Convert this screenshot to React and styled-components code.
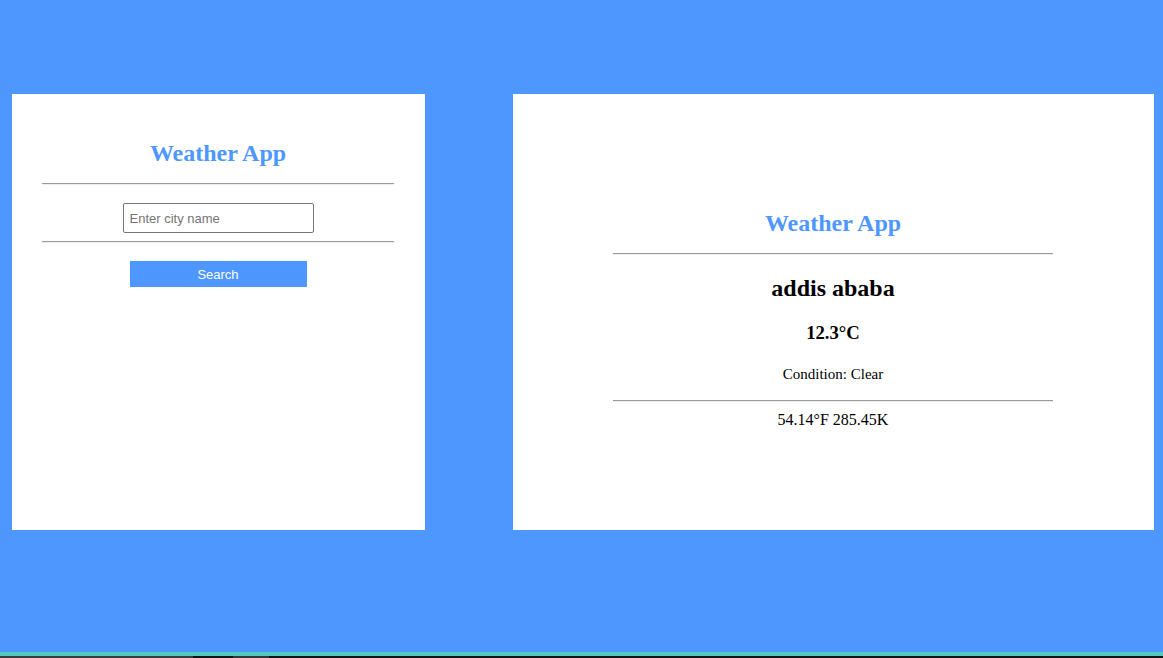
import React from "react";
import styled, { createGlobalStyle } from "styled-components";

const GlobalStyle = createGlobalStyle`
	html, body {
		margin: 0;
		padding: 0;
		background: #4d97ff;
	}
	body {
		font-family: "Liberation Serif", "Times New Roman", serif;
	}
`;

export default function App() {
	const [city, setCity] = React.useState("");
	return (
		<>
			<GlobalStyle />
			<Page>
				<Main>
					<SearchCard>
						<Title>Weather App</Title>
						<Rule $mt={16} />
						<CityInput
							type='text'
							placeholder='Enter city name'
							value={city}
							onChange={(e) => setCity(e.target.value)}
						/>
						<Rule $mt={8} />
						<SearchButton>Search</SearchButton>
					</SearchCard>
					<ResultCard>
						<Title>Weather App</Title>
						<Rule $mt={16} />
						<CityName>addis ababa</CityName>
						<Temp>12.3°C</Temp>
						<Condition>Condition: Clear</Condition>
						<Rule $mt={17} />
						<Other>54.14°F 285.45K</Other>
					</ResultCard>
				</Main>
				<Footer>
					<Stripe />
					<Tray>
						<TraySeg $w={193} $c='#3b3b3b' />
						<TraySeg $w={40} $c='#121212' />
						<TraySeg $w={36} $c='#353535' />
						<TraySeg $c='#121212' />
					</Tray>
				</Footer>
			</Page>
		</>
	);
}

const Page = styled.div`
	height: 658px;
	display: flex;
	flex-direction: column;
	overflow: hidden;
`;

const Main = styled.main`
	flex: 1;
	display: flex;
	align-items: flex-start;
	gap: 88px;
	padding: 94px 9px 0 12px;
`;

const Card = styled.section`
	background: #fff;
	height: 436px;
	box-sizing: border-box;
	display: flex;
	flex-direction: column;
	align-items: center;
	text-align: center;
`;

const SearchCard = styled(Card)`
	width: 413px;
	padding: 45px 31px 0 30px;
`;

const ResultCard = styled(Card)`
	flex: 1;
	padding: 115px 101px 0 100px;
`;

const Title = styled.h2`
	margin: 0;
	font-size: 24px;
	line-height: 28px;
	font-weight: bold;
	color: #4d97ff;
`;

const Rule = styled.hr`
	width: 100%;
	margin: ${(p) => p.$mt}px 0 0;
	height: 0;
	border: 0;
	border-top: 1px solid #9a9a9a;
	border-bottom: 1px solid #eeeeee;
`;

const CityInput = styled.input`
	margin-top: 18px;
	width: 191px;
	height: 30px;
	box-sizing: border-box;
	padding: 0 6px;
	border: 1px solid #767676;
	border-radius: 2px;
	font-family: "Liberation Sans", Arial, sans-serif;
	font-size: 13px;
	color: #000;
	outline: none;
	&::placeholder {
		color: #757575;
	}
`;

const SearchButton = styled.button`
	margin-top: 18px;
	width: 177px;
	height: 26px;
	border: none;
	background: #4d97ff;
	color: #fff;
	font-family: "Liberation Sans", Arial, sans-serif;
	font-size: 13px;
	cursor: pointer;
`;

const CityName = styled.h2`
	margin: 19px 0 0;
	font-size: 24px;
	line-height: 28px;
	color: #000;
`;

const Temp = styled.h3`
	margin: 20px 0 0;
	font-size: 18.72px;
	line-height: 22px;
	color: #000;
`;

const Condition = styled.p`
	margin: 21px 0 0;
	font-size: 15px;
	line-height: 18px;
	color: #000;
`;

const Other = styled.p`
	margin: 8px 0 0;
	font-size: 16px;
	line-height: 19px;
	color: #000;
`;

const Footer = styled.footer`
	height: 6px;
	display: flex;
	flex-direction: column;
`;

const Stripe = styled.div`
	height: 4px;
	background: #4fc9c1;
`;

const Tray = styled.div`
	height: 2px;
	display: flex;
`;

const TraySeg = styled.div`
	width: ${(p) => (p.$w ? `${p.$w}px` : "auto")};
	flex: ${(p) => (p.$w ? "none" : 1)};
	background: ${(p) => p.$c};
`;
